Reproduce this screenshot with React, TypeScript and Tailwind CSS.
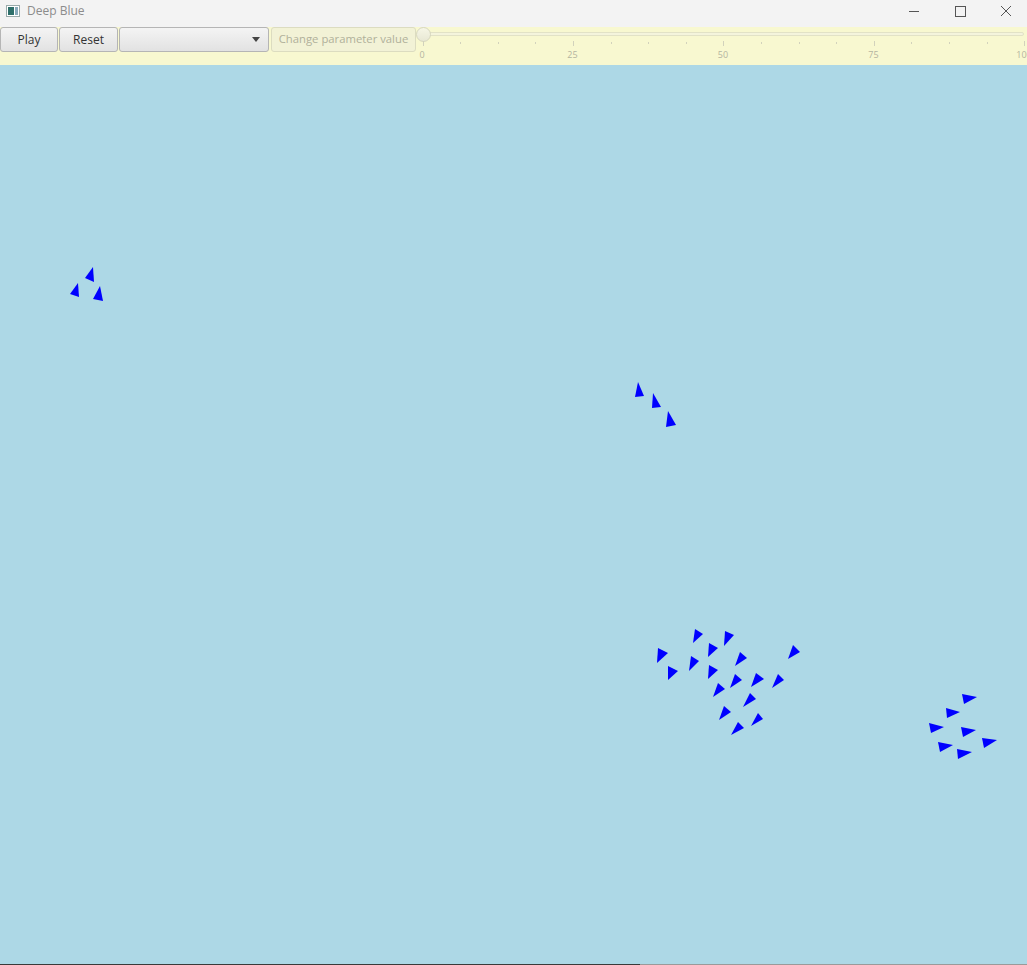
import React from "react";

// boid triangles in page coordinates
const boids: number[][] = [
  [93, 267, 85, 278, 94, 282],
  [78, 283, 70, 294, 79, 297],
  [100, 286, 93, 299, 103, 301],
  [638, 382, 635, 397, 644, 396],
  [653, 393, 652, 408, 661, 407],
  [668, 411, 666, 427, 676, 425],
  [658, 648, 657, 663, 668, 653],
  [668, 666, 668, 680, 678, 671],
  [695, 629, 693, 643, 703, 634],
  [725, 631, 724, 646, 734, 635],
  [709, 643, 708, 657, 718, 648],
  [691, 656, 689, 671, 699, 661],
  [740, 652, 735, 666, 747, 658],
  [793, 645, 788, 659, 800, 652],
  [709, 665, 708, 679, 718, 670],
  [735, 674, 730, 688, 742, 680],
  [756, 673, 751, 687, 764, 679],
  [778, 674, 772, 688, 784, 680],
  [718, 683, 713, 697, 725, 689],
  [750, 693, 743, 707, 756, 699],
  [724, 706, 719, 720, 731, 712],
  [758, 713, 751, 726, 763, 719],
  [738, 722, 731, 735, 744, 728],
  [962, 694, 964, 704, 977, 697],
  [946, 708, 947, 718, 960, 712],
  [929, 723, 931, 733, 944, 727],
  [961, 727, 963, 737, 976, 730],
  [982, 738, 984, 748, 997, 740],
  [938, 742, 940, 752, 953, 745],
  [957, 749, 958, 759, 972, 752],
];

const ticks = Array.from({ length: 17 }, (_, i) => i);

const Btn = ({ children, className = "" }: { children?: React.ReactNode; className?: string }) => (
  <div
    className={`h-[25px] flex items-center rounded-[3px] border border-[#b5b5b5] bg-gradient-to-b from-[#f4f4f4] to-[#e2e2e2] text-[12px] text-[#333] ${className}`}
  >
    {children}
  </div>
);

export default function App() {
  return (
    <div
      className="w-[1027px] h-[965px] flex flex-col overflow-hidden bg-[#add8e6]"
      style={{ fontFamily: '"Open Sans", "Noto Sans", sans-serif' }}
    >
      {/* title bar */}
      <div className="h-[27px] bg-[#f3f3f3] flex items-start shrink-0">
        <div className="mt-[5px] ml-[6px] w-[14px] h-[12px] border border-[#9aa] bg-white flex p-[1px] gap-[1px]">
          <div className="w-[6px] bg-[#2e6f6a]" />
          <div className="w-[3px] bg-[#8ab]" />
        </div>
        <span className="mt-[2px] ml-[7px] text-[12px] text-[#8c8c8c]">Deep Blue</span>
        <div className="ml-auto flex items-start h-full">
          <svg width="46" height="27" viewBox="0 0 46 27">
            <line x1="20" y1="11.5" x2="30" y2="11.5" stroke="#555" strokeWidth="1" />
          </svg>
          <svg width="46" height="27" viewBox="0 0 46 27">
            <rect x="20.5" y="6.5" width="10" height="10" fill="none" stroke="#555" strokeWidth="1" />
          </svg>
          <svg width="46" height="27" viewBox="0 0 46 27">
            <path d="M20 6 L30 16 M30 6 L20 16" stroke="#555" strokeWidth="1" />
          </svg>
        </div>
      </div>

      {/* toolbar */}
      <div className="h-[38px] bg-[#f8f8d0] flex items-start shrink-0">
        <Btn className="w-[58px] justify-center">Play</Btn>
        <Btn className="w-[59px] justify-center ml-[1px]">Reset</Btn>
        <Btn className="w-[150px] justify-end pr-[8px] ml-[1px]">
          <svg width="8" height="5" viewBox="0 0 8 5">
            <path d="M0 0 L8 0 L4 5 Z" fill="#444" />
          </svg>
        </Btn>
        <div className="h-[25px] w-[145px] ml-[2px] flex items-center justify-center rounded-[3px] border border-[#dcdcc0] bg-[#f2f2d6] text-[11.3px] text-[#b0b09a]">
          Change parameter value
        </div>
        {/* slider */}
        <div className="relative flex-1 h-full">
          <div className="absolute left-[3px] right-[3px] top-[5px] h-[4px] rounded-full border border-[#e2e2c6] bg-[#f4f4dc]" />
          <div className="absolute left-0 top-0 w-[15px] h-[15px] rounded-full border border-[#d6d6be] bg-gradient-to-b from-[#f6f6e6] to-[#e8e8d4]" />
          {ticks.map((i) => (
            <div
              key={i}
              className={`absolute w-px bg-[#d2d2bc] ${i % 4 === 0 ? "top-[14px] h-[5px]" : "top-[15px] h-[2px]"}`}
              style={{ left: 6.5 + i * 37.6 }}
            />
          ))}
          {["0", "25", "50", "75", "100"].map((t, i) => (
            <span
              key={t}
              className="absolute top-[21px] text-[9px] text-[#b4b4a0] -translate-x-1/2"
              style={{ left: 6 + i * 150.5 }}
            >
              {t}
            </span>
          ))}
        </div>
      </div>

      {/* canvas */}
      <div className="flex-1 relative">
        <svg className="absolute inset-0" width="1027" height="899" viewBox="0 65 1027 899">
          {boids.map((b, i) => (
            <polygon key={i} points={`${b[0]},${b[1]} ${b[2]},${b[3]} ${b[4]},${b[5]}`} fill="#0000ff" />
          ))}
        </svg>
      </div>
      <div className="h-px flex shrink-0">
        <div className="w-[640px] bg-[#3a3a3a]" />
        <div className="flex-1 bg-[#9a9a9a]" />
      </div>
    </div>
  );
}
